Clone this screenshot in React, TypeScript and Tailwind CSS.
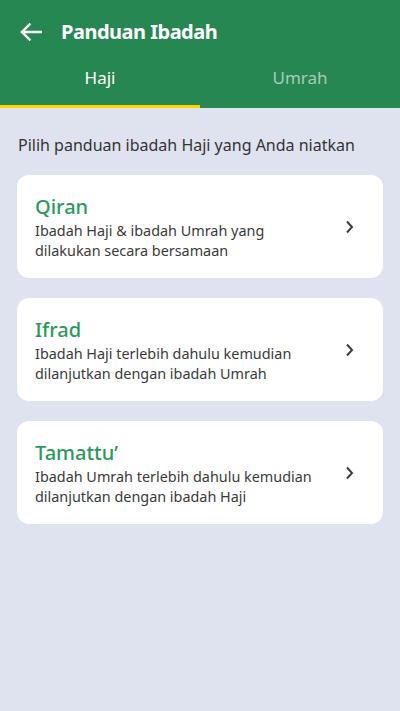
import { useState } from 'react';

const options = [
  {
    id: 'qiran',
    title: 'Qiran',
    desc: 'Ibadah Haji & ibadah Umrah yang dilakukan secara bersamaan',
  },
  {
    id: 'ifrad',
    title: 'Ifrad',
    desc: 'Ibadah Haji terlebih dahulu kemudian dilanjutkan dengan ibadah Umrah',
  },
  {
    id: 'tamattu',
    title: 'Tamattu’',
    desc: 'Ibadah Umrah terlebih dahulu kemudian dilanjutkan dengan ibadah Haji',
  },
];

const ArrowLeft = () => (
  <svg width="22" height="18" viewBox="0 0 22 18" fill="none">
    <path
      d="M21 9H2M9.5 1.5L2 9l7.5 7.5"
      stroke="white"
      strokeWidth="2.4"
      strokeLinecap="square"
    />
  </svg>
);

const Chevron = () => (
  <svg width="9" height="14" viewBox="0 0 9 14" fill="none">
    <path d="M2 1.5L7 7l-5 5.5" stroke="#3d3d3d" strokeWidth="2" />
  </svg>
);

const App = () => {
  const [tab, setTab] = useState<'haji' | 'umrah'>('haji');

  return (
    <div
      className="min-h-[711px] bg-[#dfe3ef]"
      style={{ fontFamily: '"Noto Sans", sans-serif' }}
    >
      <header className="bg-[#268752] text-white">
        <div className="flex items-center h-[64px] px-[20px] gap-[19px]">
          <ArrowLeft />
          <h1 className="text-[20px] font-bold leading-none tracking-[-0.5px]">
            Panduan Ibadah
          </h1>
        </div>
        <div className="flex">
          {(['haji', 'umrah'] as const).map(key => (
            <button
              key={key}
              onClick={() => setTab(key)}
              className={`flex-1 h-[44px] flex items-center justify-center text-[17px] pb-[14px] border-b-[3px] ${
                tab === key
                  ? 'text-white border-[#ffd500]'
                  : 'text-[#a5cdb6] border-transparent'
              }`}
            >
              {key === 'haji' ? 'Haji' : 'Umrah'}
            </button>
          ))}
        </div>
      </header>

      <main className="px-[17px] pt-[26px]">
        <p className="text-[16px] text-[#333] leading-[22px] pl-[1px]">
          Pilih panduan ibadah Haji yang Anda niatkan
        </p>
        <div className="mt-[19px] flex flex-col gap-[20px]">
          {options.map(opt => (
            <div
              key={opt.id}
              className="bg-white rounded-[12px] flex items-center pl-[18px] pr-[29px] pt-[18px] pb-[17px]"
            >
              <div className="flex-1 pr-[20px]">
                <div className="text-[20px] leading-[28px] font-medium text-[#2a9a5c]">
                  {opt.title}
                </div>
                <div className="text-[14.4px] leading-[20px] text-[#3a3a3a]">
                  {opt.desc}
                </div>
              </div>
              <Chevron />
            </div>
          ))}
        </div>
      </main>
    </div>
  );
};

export default App;
